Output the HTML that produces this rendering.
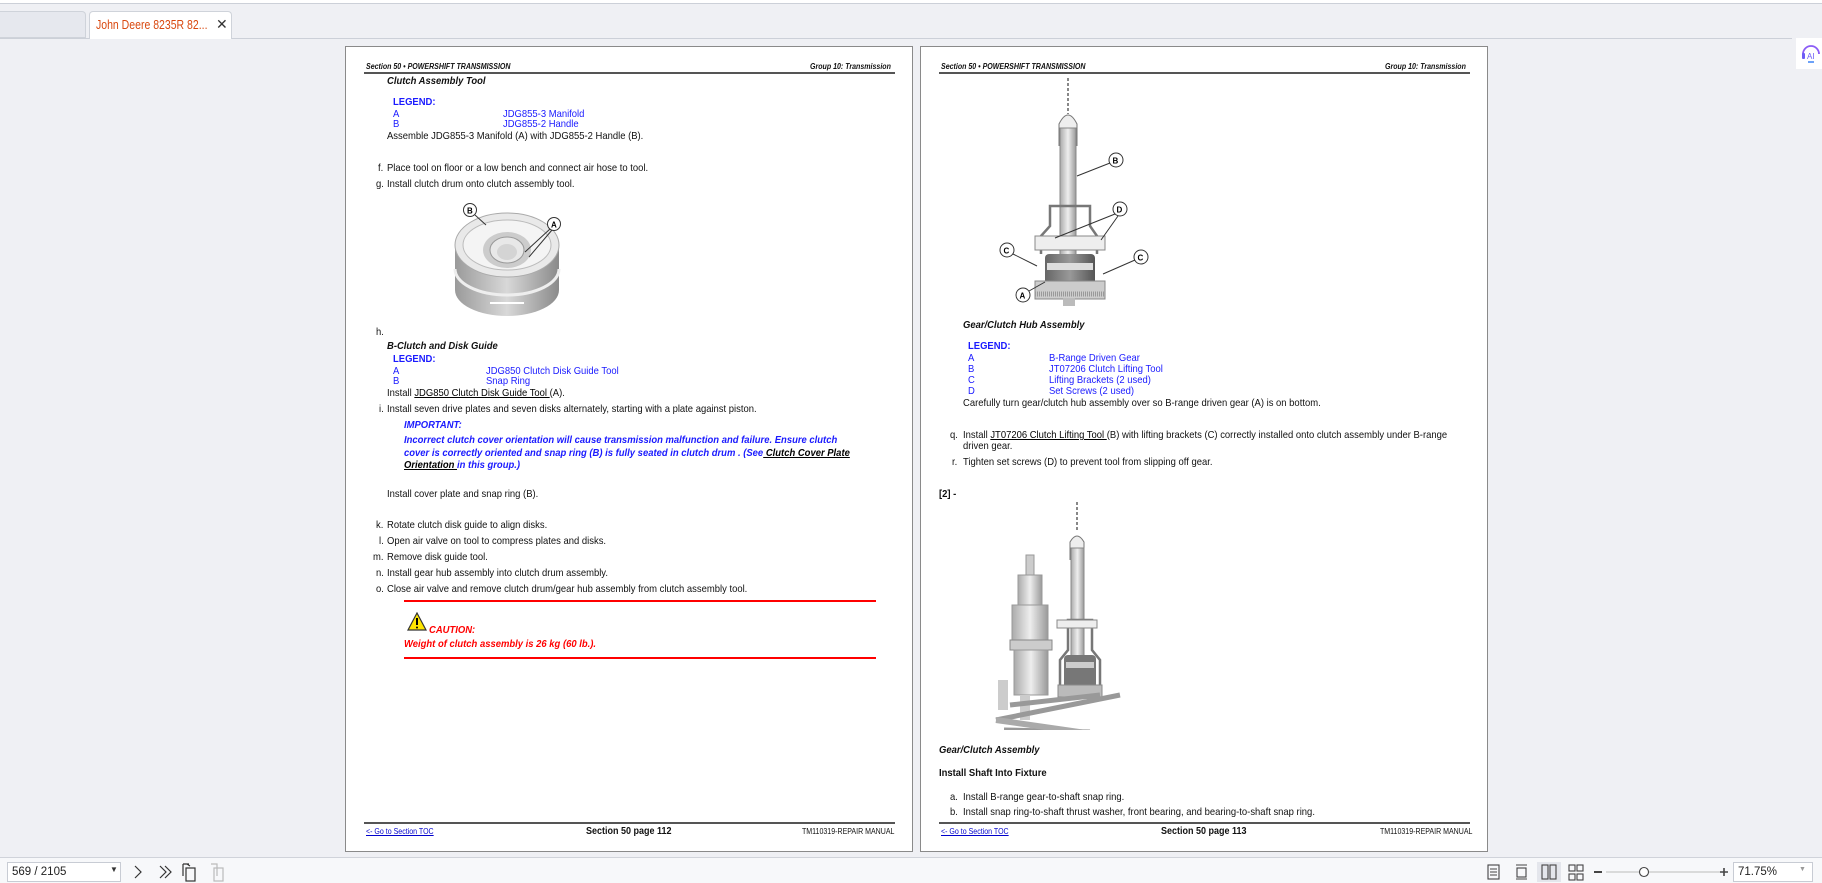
<!DOCTYPE html>
<html><head><meta charset="utf-8">
<style>
*{margin:0;padding:0;box-sizing:border-box}
body{width:1822px;height:883px;overflow:hidden;background:#eff0f4;font-family:"Liberation Sans Narrow","Liberation Sans",sans-serif;position:relative;color:#111}
.a{position:absolute;white-space:nowrap}
.t{font-size:10.5px;line-height:14px;transform:scaleX(.9);transform-origin:left center}
.page{position:absolute;top:46px;width:568px;height:806px;background:#fff;border:1px solid #8a8a8a}
.hd{font-size:8px;font-weight:bold;font-style:italic;line-height:10px;transform:scaleX(.88);transform-origin:left center}
.hr{transform-origin:right center}
.b{color:#1a1aff}
.bi{font-weight:bold;font-style:italic}
.u{text-decoration:underline}
.red{color:#f00}
.ln{position:absolute;height:2px;background:#555}
.rl{position:absolute;height:2px;background:#f00}
.ft{font-size:8px;line-height:10px;transform:scaleX(.88);transform-origin:left center}
</style></head><body>
<!-- top bar -->
<div class="a" style="left:0;top:0;width:1822px;height:4px;background:#fff;border-bottom:1px solid #ccd0d8"></div>
<div class="a" style="left:0;top:11px;width:86px;height:27px;background:#e6e8ee;border:1px solid #cfd3da;border-left:none;border-radius:0 4px 0 0"></div>
<div class="a" style="left:89px;top:11px;width:143px;height:28px;background:#fff;border:1px solid #cfd3da;border-bottom:none;border-radius:4px 4px 0 0"></div>
<div class="a" style="left:96px;top:17px;font-family:'Liberation Sans',sans-serif;font-size:12.5px;color:#d9480f;line-height:16px;transform:scaleX(.84);transform-origin:left center">John Deere 8235R 82...</div>
<div class="a" style="left:216px;top:16px;font-family:'Liberation Sans',sans-serif;font-size:14px;color:#333">✕</div>
<div class="a" style="left:0;top:38px;width:89px;height:1px;background:#ccd0d8"></div>
<div class="a" style="left:232px;top:38px;width:1560px;height:1px;background:#ccd0d8"></div>
<div class="a" style="left:1796px;top:38px;width:26px;height:31px;background:#fff"></div>
<svg class="a" style="left:1800px;top:42px" width="22" height="22" viewBox="0 0 22 22"><path d="M3 12 A8 8 0 0 1 19 12" fill="none" stroke="#8b5cf6" stroke-width="1.8"/><rect x="2" y="11" width="3" height="6" rx="1" fill="#6d5cf6"/><text x="7" y="17" font-size="8" fill="#6d5cf6" font-family="Liberation Sans">AI</text><path d="M8 20 h6" stroke="#3b82f6" stroke-width="1.5"/></svg>

<!-- LEFT PAGE -->
<div class="page" style="left:345px"></div>
<div class="a hd" style="left:366px;top:62px">Section 50 • POWERSHIFT TRANSMISSION</div>
<div class="a hd hr" style="right:931px;top:62px">Group 10: Transmission</div>
<div class="ln" style="left:364px;top:72px;width:531px"></div>
<div class="a t bi" style="left:387px;top:74px">Clutch Assembly Tool</div>
<div class="a t b" style="left:393px;top:95px;font-weight:bold">LEGEND:</div>
<div class="a t b" style="left:393px;top:107px">A</div><div class="a t b" style="left:503px;top:107px">JDG855-3 Manifold</div>
<div class="a t b" style="left:393px;top:117px">B</div><div class="a t b" style="left:503px;top:117px">JDG855-2 Handle</div>
<div class="a t" style="left:387px;top:129px">Assemble JDG855-3 Manifold (A) with JDG855-2 Handle (B).</div>
<div class="a t" style="left:378px;top:161px">f.</div><div class="a t" style="left:387px;top:161px">Place tool on floor or a low bench and connect air hose to tool.</div>
<div class="a t" style="left:376px;top:177px">g.</div><div class="a t" style="left:387px;top:177px">Install clutch drum onto clutch assembly tool.</div>
<svg class="a" style="left:440px;top:195px" width="140" height="125" viewBox="0 0 140 125">
<defs><linearGradient id="g1" x1="0" x2="1"><stop offset="0" stop-color="#9a9a9a"/><stop offset=".5" stop-color="#d8d8d8"/><stop offset="1" stop-color="#8a8a8a"/></linearGradient></defs>
<path d="M15 50 L15 95 A52 26 0 0 0 119 95 L119 50 Z" fill="url(#g1)"/>
<path d="M15 74 A52 26 0 0 0 119 74" fill="none" stroke="#eee" stroke-width="3"/>
<path d="M50 108 h34" stroke="#fff" stroke-width="2"/>
<ellipse cx="67" cy="50" rx="52" ry="32" fill="#e9e9e9" stroke="#aaa"/>
<ellipse cx="67" cy="50" rx="44" ry="25" fill="#f4f4f4" stroke="#bbb"/>
<ellipse cx="67" cy="55" rx="24" ry="18" fill="#ccc"/>
<ellipse cx="67" cy="55" rx="17" ry="13" fill="#e8e8e8" stroke="#999"/>
<ellipse cx="67" cy="57" rx="10" ry="8" fill="#d4d4d4"/>
<circle cx="30" cy="15" r="6.5" fill="#fff" stroke="#333"/><text x="27" y="18.5" font-size="8" font-weight="bold" font-family="Liberation Sans">B</text>
<path d="M35 20 L46 30" stroke="#333"/>
<circle cx="114" cy="29" r="6.5" fill="#fff" stroke="#333"/><text x="111" y="32.5" font-size="8" font-weight="bold" font-family="Liberation Sans">A</text>
<path d="M110 34 L85 57 M112 35 L89 62" stroke="#333"/>
</svg>
<div class="a t" style="left:376px;top:325px">h.</div>
<div class="a t bi" style="left:387px;top:339px">B-Clutch and Disk Guide</div>
<div class="a t b" style="left:393px;top:352px;font-weight:bold">LEGEND:</div>
<div class="a t b" style="left:393px;top:364px">A</div><div class="a t b" style="left:486px;top:364px">JDG850 Clutch Disk Guide Tool</div>
<div class="a t b" style="left:393px;top:374px">B</div><div class="a t b" style="left:486px;top:374px">Snap Ring</div>
<div class="a t" style="left:387px;top:386px">Install <span class="u" style="color:#000">JDG850 Clutch Disk Guide Tool </span>(A).</div>
<div class="a t" style="left:379px;top:402px">i.</div><div class="a t" style="left:387px;top:402px">Install seven drive plates and seven disks alternately, starting with a plate against piston.</div>
<div class="a t b bi" style="left:404px;top:418px">IMPORTANT:</div>
<div class="a t b bi" style="left:404px;top:433px">Incorrect clutch cover orientation will cause transmission malfunction and failure. Ensure clutch</div>
<div class="a t b bi" style="left:404px;top:446px">cover is correctly oriented and snap ring (B) is fully seated in clutch drum . (See<span class="u" style="color:#000"> Clutch Cover Plate</span></div>
<div class="a t b bi" style="left:404px;top:458px"><span class="u" style="color:#000">Orientation </span>in this group.)</div>
<div class="a t" style="left:387px;top:487px">Install cover plate and snap ring (B).</div>
<div class="a t" style="left:376px;top:518px">k.</div><div class="a t" style="left:387px;top:518px">Rotate clutch disk guide to align disks.</div>
<div class="a t" style="left:379px;top:534px">l.</div><div class="a t" style="left:387px;top:534px">Open air valve on tool to compress plates and disks.</div>
<div class="a t" style="left:373px;top:550px">m.</div><div class="a t" style="left:387px;top:550px">Remove disk guide tool.</div>
<div class="a t" style="left:376px;top:566px">n.</div><div class="a t" style="left:387px;top:566px">Install gear hub assembly into clutch drum assembly.</div>
<div class="a t" style="left:376px;top:582px">o.</div><div class="a t" style="left:387px;top:582px">Close air valve and remove clutch drum/gear hub assembly from clutch assembly tool.</div>
<div class="rl" style="left:404px;top:600px;width:472px"></div>
<svg class="a" style="left:407px;top:612px" width="20" height="19" viewBox="0 0 20 19"><path d="M10 1 L19 18 L1 18 Z" fill="#ffe600" stroke="#333" stroke-width="1.2"/><path d="M10 6 v7" stroke="#000" stroke-width="2"/><circle cx="10" cy="15.5" r="1" fill="#000"/></svg>
<div class="a t red bi" style="left:429px;top:623px">CAUTION:</div>
<div class="a t red bi" style="left:404px;top:637px">Weight of clutch assembly is 26 kg (60 lb.).</div>
<div class="rl" style="left:404px;top:657px;width:472px"></div>
<div class="ln" style="left:364px;top:822px;width:531px"></div>
<div class="a ft u" style="left:366px;top:827px;color:#00c">&lt;- Go to Section TOC</div>
<div class="a t" style="left:586px;top:825px;font-weight:bold;font-size:10px">Section 50 page 112</div>
<div class="a ft hr" style="right:915px;top:827px">TM110319-REPAIR MANUAL</div>

<!-- RIGHT PAGE -->
<div class="page" style="left:920px"></div>
<div class="a hd" style="left:941px;top:62px">Section 50 • POWERSHIFT TRANSMISSION</div>
<div class="a hd hr" style="right:356px;top:62px">Group 10: Transmission</div>
<div class="ln" style="left:939px;top:72px;width:531px"></div>
<svg class="a" style="left:995px;top:76px" width="170" height="232" viewBox="0 0 170 232">
<defs><linearGradient id="g2" x1="0" x2="1"><stop offset="0" stop-color="#aaa"/><stop offset=".5" stop-color="#eee"/><stop offset="1" stop-color="#999"/></linearGradient>
<linearGradient id="g3" x1="0" x2="1"><stop offset="0" stop-color="#666"/><stop offset=".5" stop-color="#999"/><stop offset="1" stop-color="#555"/></linearGradient></defs>
<path d="M73 2 v36" stroke="#888" stroke-width="2" stroke-dasharray="3 2"/>
<path d="M64 70 L64 48 Q73 30 82 48 L82 70" fill="#eee" stroke="#777"/>
<rect x="65" y="52" width="16" height="150" fill="url(#g2)" stroke="#888"/>
<path d="M46 178 L46 160 L55 150 L55 130 L95 130 L95 150 L102 160 L102 178" fill="none" stroke="#777" stroke-width="2.5"/>
<rect x="40" y="160" width="70" height="14" fill="#eee" stroke="#888"/>
<rect x="50" y="178" width="50" height="40" rx="4" fill="url(#g3)"/>
<rect x="52" y="187" width="46" height="7" fill="#ddd"/>
<rect x="40" y="205" width="70" height="18" fill="#ccc" stroke="#888"/>
<path d="M40 218 h70" stroke="#999" stroke-dasharray="1 1" stroke-width="5"/>
<rect x="68" y="222" width="12" height="8" fill="#bbb"/>
<circle cx="121" cy="84" r="7" fill="#fff" stroke="#333"/><text x="117.5" y="87.5" font-size="8" font-weight="bold" font-family="Liberation Sans">B</text><path d="M115 87 L82 100" stroke="#333"/>
<circle cx="125" cy="133" r="7" fill="#fff" stroke="#333"/><text x="121.5" y="136.5" font-size="8" font-weight="bold" font-family="Liberation Sans">D</text><path d="M120 138 L60 162 M123 140 L106 164" stroke="#333"/>
<circle cx="12" cy="174" r="7" fill="#fff" stroke="#333"/><text x="8.5" y="177.5" font-size="8" font-weight="bold" font-family="Liberation Sans">C</text><path d="M18 178 L42 190" stroke="#333"/>
<circle cx="146" cy="181" r="7" fill="#fff" stroke="#333"/><text x="142.5" y="184.5" font-size="8" font-weight="bold" font-family="Liberation Sans">C</text><path d="M140 184 L108 198" stroke="#333"/>
<circle cx="28" cy="219" r="7" fill="#fff" stroke="#333"/><text x="24.5" y="222.5" font-size="8" font-weight="bold" font-family="Liberation Sans">A</text><path d="M34 215 L50 206" stroke="#333"/>
</svg>
<div class="a t bi" style="left:963px;top:318px">Gear/Clutch Hub Assembly</div>
<div class="a t b" style="left:968px;top:339px;font-weight:bold">LEGEND:</div>
<div class="a t b" style="left:968px;top:351px">A</div><div class="a t b" style="left:1049px;top:351px">B-Range Driven Gear</div>
<div class="a t b" style="left:968px;top:362px">B</div><div class="a t b" style="left:1049px;top:362px">JT07206 Clutch Lifting Tool</div>
<div class="a t b" style="left:968px;top:373px">C</div><div class="a t b" style="left:1049px;top:373px">Lifting Brackets (2 used)</div>
<div class="a t b" style="left:968px;top:384px">D</div><div class="a t b" style="left:1049px;top:384px">Set Screws (2 used)</div>
<div class="a t" style="left:963px;top:396px">Carefully turn gear/clutch hub assembly over so B-range driven gear (A) is on bottom.</div>
<div class="a t" style="left:950px;top:428px">q.</div><div class="a t" style="left:963px;top:428px">Install <span class="u" style="color:#000">JT07206 Clutch Lifting Tool </span>(B) with lifting brackets (C) correctly installed onto clutch assembly under B-range</div>
<div class="a t" style="left:963px;top:439px">driven gear.</div>
<div class="a t" style="left:952px;top:455px">r.</div><div class="a t" style="left:963px;top:455px">Tighten set screws (D) to prevent tool from slipping off gear.</div>
<div class="a t" style="left:939px;top:487px;font-weight:bold">[2] -</div>
<svg class="a" style="left:980px;top:500px" width="145" height="230" viewBox="0 0 145 230">
<defs><linearGradient id="g4" x1="0" x2="1"><stop offset="0" stop-color="#aaa"/><stop offset=".5" stop-color="#eee"/><stop offset="1" stop-color="#999"/></linearGradient></defs>
<path d="M97 2 v30" stroke="#888" stroke-width="2" stroke-dasharray="3 2"/>
<path d="M90 60 L90 42 Q97 30 104 42 L104 60" fill="#eee" stroke="#777"/>
<rect x="91" y="48" width="13" height="140" fill="url(#g4)" stroke="#888"/>
<path d="M80 185 L80 160 L88 150 L88 120 L112 120 L112 150 L120 160 L120 185" fill="none" stroke="#777" stroke-width="2.5"/>
<rect x="77" y="120" width="40" height="8" fill="#eee" stroke="#888"/>
<rect x="84" y="155" width="32" height="35" rx="4" fill="#777"/>
<rect x="86" y="162" width="28" height="6" fill="#ccc"/>
<rect x="78" y="185" width="44" height="12" fill="#bbb" stroke="#888"/>
<rect x="46" y="55" width="8" height="20" fill="#ccc" stroke="#999"/>
<rect x="38" y="75" width="24" height="30" fill="url(#g4)" stroke="#999"/>
<rect x="32" y="105" width="36" height="35" fill="url(#g4)" stroke="#999"/>
<rect x="30" y="140" width="42" height="10" fill="#ccc" stroke="#888"/>
<rect x="34" y="150" width="34" height="45" fill="url(#g4)" stroke="#999"/>
<rect x="40" y="195" width="10" height="25" fill="#ccc"/>
<path d="M16 220 L140 195 M24 230 L110 232 M30 205 L120 195" stroke="#999" stroke-width="5"/>
<path d="M16 220 L120 235" stroke="#aaa" stroke-width="6"/>
<rect x="18" y="180" width="10" height="30" fill="#ccc"/>
</svg>
<div class="a t bi" style="left:939px;top:743px">Gear/Clutch Assembly</div>
<div class="a t" style="left:939px;top:766px;font-weight:bold">Install Shaft Into Fixture</div>
<div class="a t" style="left:950px;top:790px">a.</div><div class="a t" style="left:963px;top:790px">Install B-range gear-to-shaft snap ring.</div>
<div class="a t" style="left:950px;top:805px">b.</div><div class="a t" style="left:963px;top:805px">Install snap ring-to-shaft thrust washer, front bearing, and bearing-to-shaft snap ring.</div>
<div class="ln" style="left:939px;top:822px;width:531px"></div>
<div class="a ft u" style="left:941px;top:827px;color:#00c">&lt;- Go to Section TOC</div>
<div class="a t" style="left:1161px;top:825px;font-weight:bold;font-size:10px">Section 50 page 113</div>
<div class="a ft hr" style="right:337px;top:827px">TM110319-REPAIR MANUAL</div>

<!-- bottom toolbar -->
<div class="a" style="left:0;top:857px;width:1822px;height:26px;background:#f7f8fa;border-top:1px solid #d0d3da"></div>
<div class="a" style="left:7px;top:862px;width:114px;height:20px;background:#fff;border:1px solid #c8ccd4"></div>
<div class="a" style="left:12px;top:864px;font-family:'Liberation Sans',sans-serif;font-size:11.5px;line-height:16px;color:#222">569 / 2105</div>
<div class="a" style="left:110px;top:865px;font-size:8px;color:#333">▼</div>
<svg class="a" style="left:130px;top:862px" width="110" height="20" viewBox="0 0 110 20" fill="none" stroke="#333" stroke-width="1.2">
<path d="M5 4 L11 10 L5 16"/><path d="M30 4 L36 10 L30 16 M35 4 L41 10 L35 16"/>
<rect x="56" y="6" width="9" height="13"/><path d="M53 2 v12 M53 2 h6 M60 4 l-3 -2"/>
<rect x="84" y="6" width="9" height="13" stroke="#bbb"/><path d="M81 2 h6 v12" stroke="#bbb"/>
</svg>
<svg class="a" style="left:1484px;top:862px" width="340" height="20" viewBox="0 0 340 20" fill="none" stroke="#444" stroke-width="1.1">
<rect x="4" y="3" width="11" height="14"/><path d="M6 7h7M6 10h7M6 13h7"/>
<path d="M32 3h11M32 17h11"/><rect x="33" y="6" width="9" height="9"/>
<rect x="53" y="0" width="24" height="20" fill="#e4e6ec" stroke="none"/>
<rect x="58" y="3" width="6" height="14"/><rect x="66" y="3" width="6" height="14"/>
<rect x="85" y="3" width="6" height="6"/><rect x="93" y="3" width="6" height="6"/><rect x="85" y="12" width="6" height="6"/><rect x="93" y="12" width="6" height="6"/>
<path d="M110 10h8" stroke-width="2"/><path d="M122 10h114" stroke="#bbb"/>
<circle cx="160" cy="10" r="4.5" fill="#fff"/>
<path d="M236 10h8M240 6v8" stroke-width="1.6"/>
</svg>
<div class="a" style="left:1733px;top:862px;width:80px;height:20px;background:#fff;border:1px solid #c8ccd4"></div>
<div class="a" style="left:1738px;top:864px;font-family:'Liberation Sans',sans-serif;font-size:11.5px;line-height:16px;color:#222">71.75%</div>
<div class="a" style="left:1799px;top:866px;font-size:7px;color:#999">▼</div>
</body></html>
